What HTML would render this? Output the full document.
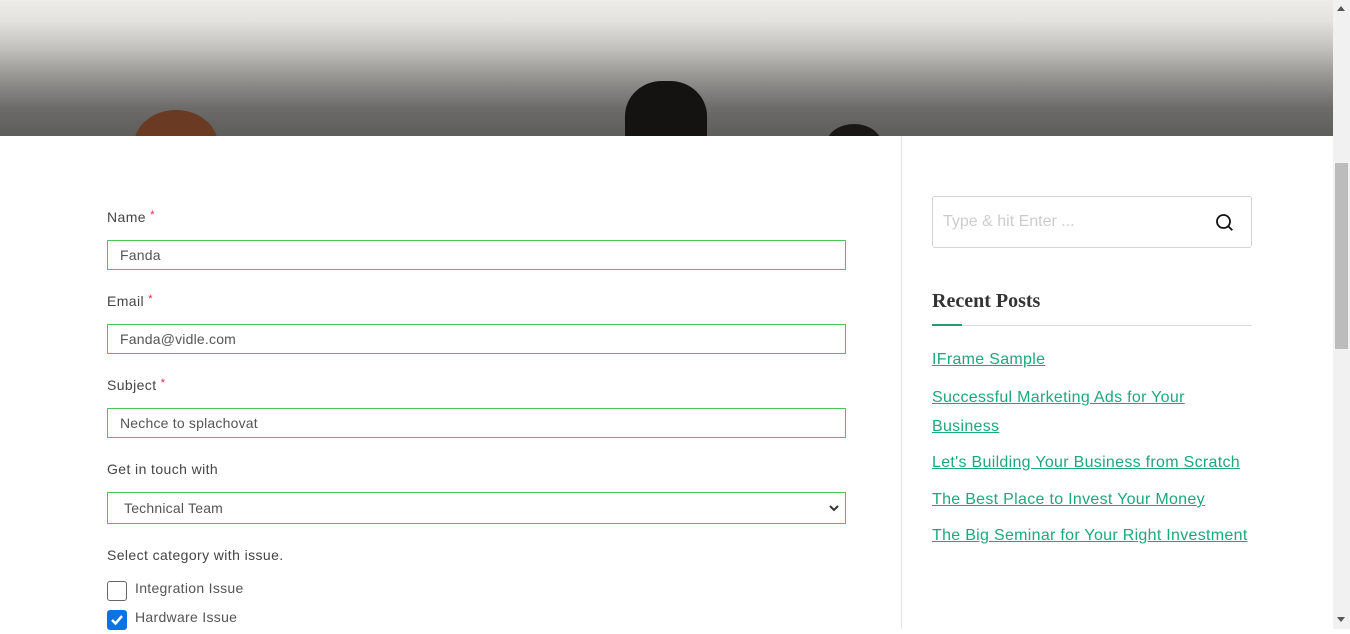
<!DOCTYPE html>
<html><head><style>
*{margin:0;padding:0;box-sizing:border-box}
body{width:1350px;height:629px;overflow:hidden;background:#fff;font-family:"Liberation Sans",sans-serif;position:relative;color:#333}
.hero{position:absolute;left:0;top:0;width:1333px;height:136px;background:linear-gradient(#eeece8 0%,#e5e3df 15%,#c4c2be 35%,#8f8e8b 60%,#6c6b69 80%,#5d5d5b 100%);overflow:hidden}
.head{position:absolute}
.sb{position:absolute;left:1333px;top:0;width:17px;height:629px;background:#f1f1f1}
.thumb{position:absolute;left:1335px;top:163px;width:13px;height:186px;background:#bcbcbc}
.vline{position:absolute;left:901px;top:136px;width:1px;height:493px;background:#e5e5e5}
.lbl{position:absolute;left:107px;font-size:14px;color:#444;letter-spacing:0.4px}
.lbl span{color:#e24;font-size:11px;vertical-align:top}
.inp{position:absolute;left:107px;width:739px;height:30px;border:1px solid #4cc45a;font-size:14px;color:#555;padding:6px 12px;letter-spacing:0.2px}
.cb{position:absolute;left:107px;width:20px;height:20px;border:1px solid #666;border-radius:3px}
.cbl{position:absolute;left:135px;font-size:14px;color:#555;letter-spacing:0.3px}
a{position:absolute;left:932px;font-size:16px;color:#1ea87a;text-decoration:underline;letter-spacing:0.3px}
</style></head><body>
<div class="hero">
<div class="head" style="left:134px;top:110px;width:84px;height:50px;background:#6a3a22;border-radius:50% 50% 0 0/70% 70% 0 0"></div>
<div class="head" style="left:625px;top:81px;width:82px;height:70px;background:#151311;border-radius:45% 45% 0 0/50% 50% 0 0"></div>
<div class="head" style="left:826px;top:124px;width:56px;height:30px;background:#1a1816;border-radius:50% 50% 0 0/70% 70% 0 0"></div>
</div>
<div class="sb"></div><div class="thumb"></div>
<div style="position:absolute;left:1337px;top:6px;width:0;height:0;border-left:4px solid transparent;border-right:4px solid transparent;border-bottom:5px solid #555"></div>
<div style="position:absolute;left:1337px;top:617px;width:0;height:0;border-left:4px solid transparent;border-right:4px solid transparent;border-top:5px solid #555"></div>
<div class="vline"></div>

<div class="lbl" style="top:209px">Name <span>*</span></div>
<div class="inp" style="top:240px">Fanda</div>
<div class="lbl" style="top:293px">Email <span>*</span></div>
<div class="inp" style="top:324px">Fanda@vidle.com</div>
<div class="lbl" style="top:377px">Subject <span>*</span></div>
<div class="inp" style="top:408px">Nechce to splachovat</div>
<div class="lbl" style="top:461px">Get in touch with</div>
<div class="inp" style="top:492px;height:32px;padding:7px 16px">Technical Team
<svg style="position:absolute;right:6px;top:12px" width="10" height="7" viewBox="0 0 10 7"><path d="M1 1l4 4 4-4" stroke="#333" stroke-width="2" fill="none"/></svg></div>
<div class="lbl" style="top:547px">Select category with issue.</div>
<div class="cb" style="top:581px"></div>
<div class="cbl" style="top:580px">Integration Issue</div>
<div class="cb" style="top:610px;background:#0b74e5;border-color:#0b74e5"><svg width="18" height="18" viewBox="0 0 18 18"><path d="M4 9l3.5 3.5L14 5" stroke="#fff" stroke-width="2.5" fill="none"/></svg></div>
<div class="cbl" style="top:609px">Hardware Issue</div>

<div style="position:absolute;left:932px;top:196px;width:320px;height:52px;border:1px solid #d4d4d4;border-radius:3px">
<span style="position:absolute;left:10px;top:16px;font-size:16px;color:#ccc">Type &amp; hit Enter ...</span>
<svg style="position:absolute;left:282px;top:16px" width="20" height="20" viewBox="0 0 20 20"><circle cx="8.5" cy="8.5" r="6.5" stroke="#111" stroke-width="1.8" fill="none"/><path d="M13.3 13.3l4 4" stroke="#111" stroke-width="1.8"/></svg>
</div>
<div style="position:absolute;left:932px;top:290px;font-family:'Liberation Serif',serif;font-weight:bold;font-size:20px;color:#333">Recent Posts</div>
<div style="position:absolute;left:932px;top:325px;width:320px;height:1px;background:#ddd"></div>
<div style="position:absolute;left:932px;top:324px;width:30px;height:2px;background:#1e9e6c"></div>
<a style="top:351px">IFrame Sample</a>
<a style="line-height:29px;width:300px;top:383px">Successful Marketing Ads for Your Business</a>
<a style="top:454px">Let's Building Your Business from Scratch</a>
<a style="top:491px">The Best Place to Invest Your Money</a>
<a style="top:527px">The Big Seminar for Your Right Investment</a>
</body></html>
